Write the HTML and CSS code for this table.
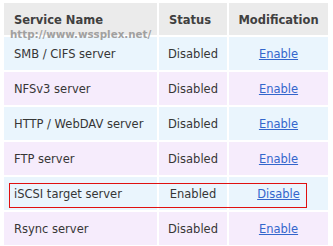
FILE: index.html
```html
<!DOCTYPE html>
<html>
<head>
<meta charset="utf-8">
<link rel="stylesheet" href="styles.css">
</head>
<body>
<div class="wrap">
  <table class="services">
    <colgroup>
      <col class="c-name">
      <col class="c-status">
      <col class="c-mod">
    </colgroup>
    <thead>
      <tr>
        <th class="th-name">Service Name</th>
        <th class="th-status">Status</th>
        <th class="th-mod">Modification</th>
      </tr>
    </thead>
    <tbody>
      <tr class="row-blue">
        <td class="name">SMB / CIFS server</td>
        <td class="status">Disabled</td>
        <td class="mod"><a href="#">Enable</a></td>
      </tr>
      <tr class="row-purple">
        <td class="name">NFSv3 server</td>
        <td class="status">Disabled</td>
        <td class="mod"><a href="#">Enable</a></td>
      </tr>
      <tr class="row-blue">
        <td class="name">HTTP / WebDAV server</td>
        <td class="status">Disabled</td>
        <td class="mod"><a href="#">Enable</a></td>
      </tr>
      <tr class="row-purple">
        <td class="name">FTP server</td>
        <td class="status">Disabled</td>
        <td class="mod"><a href="#">Enable</a></td>
      </tr>
      <tr class="row-blue">
        <td class="name">iSCSI target server</td>
        <td class="status">Enabled</td>
        <td class="mod"><a href="#">Disable</a></td>
      </tr>
      <tr class="row-purple">
        <td class="name">Rsync server</td>
        <td class="status">Disabled</td>
        <td class="mod"><a href="#">Enable</a></td>
      </tr>
    </tbody>
  </table>
  <div class="watermark">http://www.wssplex.net/</div>
  <div class="highlight"></div>
</div>
</body>
</html>
```

FILE: styles.css
```css
html, body {
  margin: 0;
  padding: 0;
  background: #ffffff;
}

body {
  font-family: "DejaVu Sans", Verdana, sans-serif;
  font-size: 11.5px;
  color: #363636;
}

.wrap {
  position: relative;
  padding: 1px 0 0 2px;
}

.services {
  border-collapse: separate;
  border-spacing: 2px;
  table-layout: fixed;
  width: 328px;
}

.c-name { width: 153px; }
.c-status { width: 68px; }
.c-mod { width: 99px; }

.services th {
  background: #ebebeb;
  color: #404040;
  font-weight: bold;
  height: 30px;
  padding: 2px 10px 0;
  text-align: left;
  vertical-align: middle;
  white-space: nowrap;
}

.services th.th-mod {
  text-align: center;
  padding: 2px 0 0;
}

.services td {
  height: 32px;
  padding: 1px 0 0;
  vertical-align: middle;
  white-space: nowrap;
}

.services td.name {
  padding-left: 10px;
}

.services td.status,
.services td.mod {
  text-align: center;
}

.row-blue td {
  background: #eaf5fd;
}

.row-purple td {
  background: #f6ecfc;
}

.services a {
  color: #3366cc;
  text-decoration: underline;
}

/* site stamp printed across the header edge */
.watermark {
  position: absolute;
  left: 10px;
  top: 28px;
  font-size: 10.3px;
  font-weight: bold;
  color: #a0a0a0;
  white-space: nowrap;
}

/* selected row outline */
.highlight {
  position: absolute;
  left: 9px;
  top: 183px;
  width: 296px;
  height: 23px;
  border: 1px solid #e01010;
}
```
